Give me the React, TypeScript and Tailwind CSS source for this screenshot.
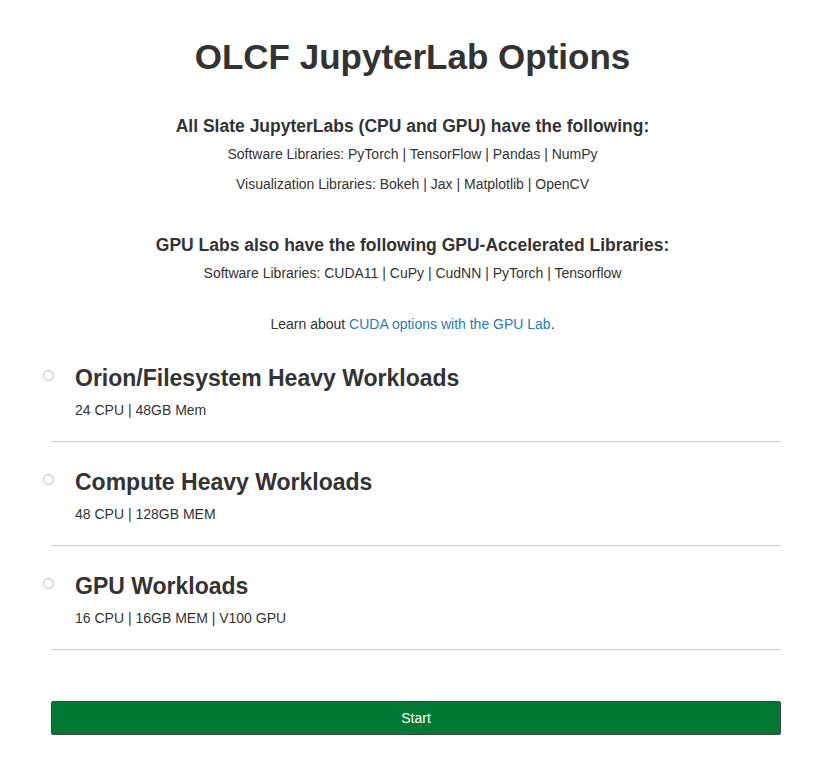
import React from "react";

const options = [
  { title: "Orion/Filesystem Heavy Workloads", sub: "24 CPU | 48GB Mem" },
  { title: "Compute Heavy Workloads", sub: "48 CPU | 128GB MEM" },
  { title: "GPU Workloads", sub: "16 CPU | 16GB MEM | V100 GPU" },
];

export default function App() {
  return (
    <div
      className="w-[825px] h-[760px] bg-white text-[#333333]"
      style={{ fontFamily: '"Liberation Sans", Arial, sans-serif' }}
    >
      <div className="pt-[37px] text-center">
        <h1 className="text-[35px] leading-[40px] font-bold">OLCF JupyterLab Options</h1>
        <h3 className="mt-[37px] text-[17.5px] leading-[24px] font-bold">
          All Slate JupyterLabs (CPU and GPU) have the following:
        </h3>
        <p className="mt-[7px] text-[14px] leading-[18px]">
          Software Libraries: PyTorch | TensorFlow | Pandas | NumPy
        </p>
        <p className="mt-[12px] text-[14px] leading-[18px]">
          Visualization Libraries: Bokeh | Jax | Matplotlib | OpenCV
        </p>
        <h3 className="mt-[40px] text-[17.5px] leading-[24px] font-bold">
          GPU Labs also have the following GPU-Accelerated Libraries:
        </h3>
        <p className="mt-[7px] text-[14px] leading-[18px]">
          Software Libraries: CUDA11 | CuPy | CudNN | PyTorch | Tensorflow
        </p>
        <p className="mt-[33px] text-[14px] leading-[18px]">
          Learn about{" "}
          <a className="text-[#2a7ab9]" href="#">
            CUDA options with the GPU Lab
          </a>
          .
        </p>
      </div>
      <div className="ml-[51px] w-[730px] mt-[5px]">
        {options.map((o) => (
          <div key={o.title} className="border-b border-[#cccccc] pt-[26px] pb-[22px]">
            <div className="flex items-start ml-[-8px]">
              <span className="mt-[6px] w-[11px] h-[11px] rounded-full border border-[#bdbdbd] bg-white shrink-0" />
              <div className="ml-[21px]">
                <div className="text-[23px] leading-[28px] font-bold">{o.title}</div>
                <div className="mt-[9px] text-[14px] leading-[18px]">{o.sub}</div>
              </div>
            </div>
          </div>
        ))}
        <button className="mt-[51px] w-full h-[34px] bg-[#007934] border border-[#3d4a40] rounded-[2px] text-white text-[14px]">
          Start
        </button>
      </div>
    </div>
  );
}
